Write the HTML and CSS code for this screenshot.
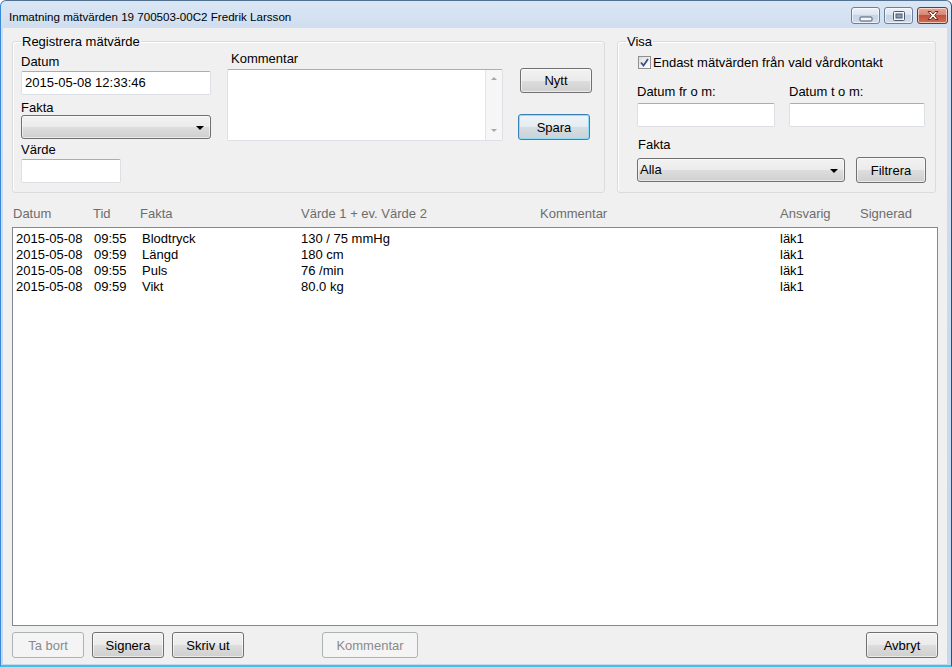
FILE: index.html
```html
<!DOCTYPE html>
<html lang="sv">
<head>
<meta charset="utf-8">
<title>Inmatning mätvärden</title>
<link rel="stylesheet" href="styles.css">
</head>
<body>
<div class="window">
  <div class="titlebar">
    <span class="title">Inmatning mätvärden 19 700503-00C2 Fredrik Larsson</span>
    <div class="caption-buttons">
      <span class="cbtn">
        <svg width="14" height="6" viewBox="0 0 14 6"><rect x="1" y="1" width="12" height="4" rx="1" fill="#f4f6f9" stroke="#4b5a6e"/></svg>
      </span>
      <span class="cbtn">
        <svg width="12" height="10" viewBox="0 0 12 10"><rect x="0.5" y="0.5" width="11" height="9" rx="1" fill="#f4f6f9" stroke="#4b5a6e"/><rect x="3" y="3" width="6" height="4" fill="#8d9bb0" stroke="#4b5a6e" stroke-width="1"/></svg>
      </span>
      <span class="cbtn close">
        <svg width="14" height="11" viewBox="0 0 14 11"><path d="M2 1.5 L5 1.5 L7 4 L9 1.5 L12 1.5 L8.6 5.5 L12 9.5 L9 9.5 L7 7 L5 9.5 L2 9.5 L5.4 5.5 Z" fill="#ffffff" stroke="#6e2a22" stroke-width="1" stroke-linejoin="round"/></svg>
      </span>
    </div>
  </div>

  <div class="client">
    <div class="top">
      <fieldset class="group reg">
        <legend>Registrera mätvärde</legend>
        <div class="reg-body">
          <div class="col fields">
            <span class="lbl">Datum</span>
            <div class="textbox w190">2015-05-08 12:33:46</div>
            <span class="lbl fakta-lbl">Fakta</span>
            <div class="combo w190"><span class="combo-text"></span><span class="arrow"></span></div>
            <span class="lbl varde-lbl">Värde</span>
            <div class="textbox w100"></div>
          </div>
          <div class="col comment">
            <span class="lbl comment-lbl">Kommentar</span>
            <div class="memo">
              <div class="memo-text"></div>
              <div class="vscroll"><span class="sarrow up"></span><span class="sarrow down"></span></div>
            </div>
          </div>
          <div class="col actions">
            <button class="btn nytt" type="button">Nytt</button>
            <button class="btn spara focused" type="button">Spara</button>
          </div>
        </div>
      </fieldset>

      <fieldset class="group visa">
        <legend>Visa</legend>
        <div class="visa-body">
          <div class="check-row">
            <span class="checkbox">
              <svg width="9" height="9" viewBox="0 0 9 9"><path d="M1 4.5 L3.5 7.5 L8 1" fill="none" stroke="#3b4f8e" stroke-width="1.8"/></svg>
            </span>
            <span>Endast mätvärden från vald vårdkontakt</span>
          </div>
          <div class="date-row">
            <div class="date-field">
              <span class="lbl">Datum fr o m:</span>
              <div class="textbox w138"></div>
            </div>
            <div class="date-field">
              <span class="lbl">Datum t o m:</span>
              <div class="textbox w136"></div>
            </div>
          </div>
          <span class="lbl visa-fakta">Fakta</span>
          <div class="filter-row">
            <div class="combo w208"><span class="combo-text">Alla</span><span class="arrow"></span></div>
            <button class="btn filtrera" type="button">Filtrera</button>
          </div>
        </div>
      </fieldset>
    </div>

    <div class="list-header">
      <span>Datum</span>
      <span>Tid</span>
      <span>Fakta</span>
      <span>Värde 1 + ev. Värde 2</span>
      <span>Kommentar</span>
      <span>Ansvarig</span>
      <span>Signerad</span>
    </div>

    <div class="listbox">
      <div class="row"><span>2015-05-08</span><span>09:55</span><span>Blodtryck</span><span>130 / 75 mmHg</span><span></span><span>läk1</span></div>
      <div class="row"><span>2015-05-08</span><span>09:59</span><span>Längd</span><span>180 cm</span><span></span><span>läk1</span></div>
      <div class="row"><span>2015-05-08</span><span>09:55</span><span>Puls</span><span>76 /min</span><span></span><span>läk1</span></div>
      <div class="row"><span>2015-05-08</span><span>09:59</span><span>Vikt</span><span>80.0 kg</span><span></span><span>läk1</span></div>
    </div>

    <div class="bottom-bar">
      <button class="btn" type="button" disabled>Ta bort</button>
      <button class="btn" type="button">Signera</button>
      <button class="btn" type="button">Skriv ut</button>
      <button class="btn kommentar" type="button" disabled>Kommentar</button>
      <button class="btn avbryt" type="button">Avbryt</button>
    </div>
  </div>
</div>
</body>
</html>
```

FILE: styles.css
```css
* { box-sizing: border-box; }

html, body {
  margin: 0;
  padding: 0;
  width: 952px;
  height: 667px;
  overflow: hidden;
  background: #ffffff;
}

body {
  font-family: "Liberation Sans", Arial, sans-serif;
  font-size: 13px;
  color: #000000;
}

.window {
  width: 952px;
  height: 667px;
  display: flex;
  flex-direction: column;
  background: linear-gradient(to bottom, #dae6f4 0px, #cfdeef 28px, #c6d8ee 100%);
  border-top: 1px solid #52708f;
  border-left: 1px solid #3b88d6;
  border-right: 1px solid #2c4e74;
  border-bottom: 2px solid #3cc3ea;
  border-radius: 6px 6px 0 0;
  padding: 0 4px 1px 2px;
}

/* ---------- title bar ---------- */
.titlebar {
  height: 27px;
  display: flex;
  align-items: center;
  padding-left: 6px;
}

.title {
  font-size: 11.6px;
  color: #000000;
  padding-top: 3px;
}

.caption-buttons {
  margin-left: auto;
  display: flex;
  gap: 4px;
  align-self: flex-start;
  margin-top: 6px;
  margin-right: -1px;
}

.cbtn {
  width: 29px;
  height: 17px;
  border: 1px solid #6d7f98;
  border-radius: 3px;
  background: linear-gradient(to bottom, #edf2f9 0%, #dbe5f1 45%, #c5d4e7 50%, #cfdcec 100%);
  box-shadow: inset 0 0 0 1px rgba(255,255,255,0.6);
  display: flex;
  align-items: center;
  justify-content: center;
}

.cbtn:first-child svg { margin-top: 6px; }

.cbtn.close {
  width: 31px;
  border-color: #7b3328;
  background: linear-gradient(to bottom, #e8a493 0%, #d98673 45%, #c2523c 50%, #cf6d55 100%);
}

/* ---------- client ---------- */
.client {
  flex: 1;
  background: #f0f0f0;
  display: flex;
  flex-direction: column;
  padding: 6px 9px 6px 9px;
}

.top {
  display: flex;
  gap: 12px;
}

.group {
  margin: 0;
  border: 1px solid #d9dcdf;
  border-radius: 3px;
  padding: 0 8px 9px 8px;
  min-width: 0;
  box-shadow: inset 1px 1px 0 #ffffff;
}

.group legend {
  padding: 0 1px;
  line-height: 15px;
  font-size: 13px;
  color: #000;
}

.reg { width: 593px; }
.visa { width: 319px; }

.lbl {
  display: block;
  line-height: 15px;
}

.reg-body {
  display: flex;
  align-items: flex-start;
}

.col { display: flex; flex-direction: column; }

.fields { width: 190px; margin-top: 5px; }
.fields .textbox.w190 { margin-top: 2px; }
.fakta-lbl { margin-top: 5px; }
.varde-lbl { margin-top: 3px; }
.fields .textbox.w100 { margin-top: 2px; }

.comment { margin-left: 16px; margin-top: 2px; }
.comment-lbl { padding-left: 4px; }
.comment .memo { margin-top: 3px; }

.actions { margin-left: 17px; margin-top: 19px; align-items: flex-start; }
.actions .spara { margin-top: 21px; margin-left: -2px; height: 26px; }

/* text box */
.textbox {
  height: 24px;
  background: #ffffff;
  border: 1px solid #dcdfe4;
  border-top-color: #abadb3;
  border-radius: 2px;
  padding: 0 3px;
  line-height: 22px;
  font-size: 13px;
  white-space: nowrap;
  overflow: hidden;
}

.w190 { width: 190px; }
.w100 { width: 100px; }
.w138 { width: 138px; }
.w136 { width: 136px; }
.w208 { width: 208px; }

/* combo box */
.combo {
  height: 24px;
  border: 1px solid #707070;
  border-radius: 3px;
  background: linear-gradient(to bottom, #f2f2f2 0%, #ebebeb 50%, #dddddd 51%, #cfcfcf 100%);
  box-shadow: inset 0 0 0 1px rgba(255,255,255,0.55);
  display: flex;
  align-items: center;
  padding: 0 6px 0 2px;
}

.combo-text { flex: 1; line-height: 22px; }

.arrow {
  width: 0;
  height: 0;
  border-left: 4px solid transparent;
  border-right: 4px solid transparent;
  border-top: 4px solid #000000;
  margin-top: 1px;
}

/* memo */
.memo {
  width: 276px;
  height: 72px;
  background: #ffffff;
  border: 1px solid #dcdfe4;
  border-top-color: #abadb3;
  border-radius: 2px;
  display: flex;
}

.memo-text { flex: 1; }

.vscroll {
  width: 17px;
  background: #f6f6f6;
  border-left: 1px solid #e4e4e4;
  display: flex;
  flex-direction: column;
  justify-content: space-between;
  align-items: center;
  padding: 7px 0 8px;
}

.sarrow {
  width: 0;
  height: 0;
  border-left: 3px solid transparent;
  border-right: 3px solid transparent;
}
.sarrow.up { border-bottom: 3px solid #a8a8a8; }
.sarrow.down { border-top: 3px solid #a8a8a8; }

/* buttons */
.btn {
  font-family: "Liberation Sans", Arial, sans-serif;
  font-size: 13px;
  color: #000000;
  width: 72px;
  height: 26px;
  padding: 0;
  border: 1px solid #707070;
  border-radius: 3px;
  background: linear-gradient(to bottom, #f2f2f2 0%, #ebebeb 50%, #dddddd 51%, #cfcfcf 100%);
  box-shadow: inset 0 0 0 1px rgba(255,255,255,0.6);
}

.btn.nytt { height: 25px; }

.btn.focused {
  border-color: #3c7fb1;
  box-shadow: inset 0 0 0 1px #8fdcf8;
  background: linear-gradient(to bottom, #eef5f9 0%, #e4ecf1 50%, #d6dde2 51%, #cad3d9 100%);
}

.btn:disabled {
  color: #8a8a8a;
  border-color: #adb2b5;
  background: #f4f4f4;
  box-shadow: none;
}

/* visa group */
.visa-body {
  padding-left: 11px;
  display: flex;
  flex-direction: column;
}

.check-row {
  display: flex;
  align-items: center;
  margin-top: 6px;
  line-height: 15px;
}

.checkbox {
  width: 13px;
  height: 13px;
  border: 1px solid #8e8f8f;
  background: linear-gradient(135deg, #dcdcdc 0%, #f7f7f7 70%, #ffffff 100%);
  display: flex;
  align-items: center;
  justify-content: center;
  margin-left: 1px;
  margin-right: 2px;
}

.date-row {
  display: flex;
  gap: 14px;
  margin-top: 14px;
}

.date-field .lbl { margin-bottom: 4px; }

.visa-fakta { margin-top: 10px; margin-left: 1px; }

.filter-row {
  display: flex;
  align-items: center;
  gap: 11px;
  margin-top: 5px;
}

.filtrera { width: 70px; }

/* list */
.list-header {
  display: grid;
  grid-template-columns: 80px 47px 161px 239px 240px 80px 1fr;
  margin-top: 13px;
  padding-left: 1px;
  line-height: 15px;
  color: #6d6d6d;
}

.listbox {
  flex: 1;
  margin-top: 6px;
  background: #ffffff;
  border: 1px solid #828790;
  padding: 3px 3px;
}

.row {
  display: grid;
  grid-template-columns: 78px 48px 159px 240px 239px 1fr;
  line-height: 16px;
  white-space: nowrap;
}

.bottom-bar {
  display: flex;
  gap: 8px;
  margin-top: 6px;
}

.bottom-bar .kommentar { width: 96px; margin-left: 70px; }
.bottom-bar .avbryt { margin-left: auto; }
```
